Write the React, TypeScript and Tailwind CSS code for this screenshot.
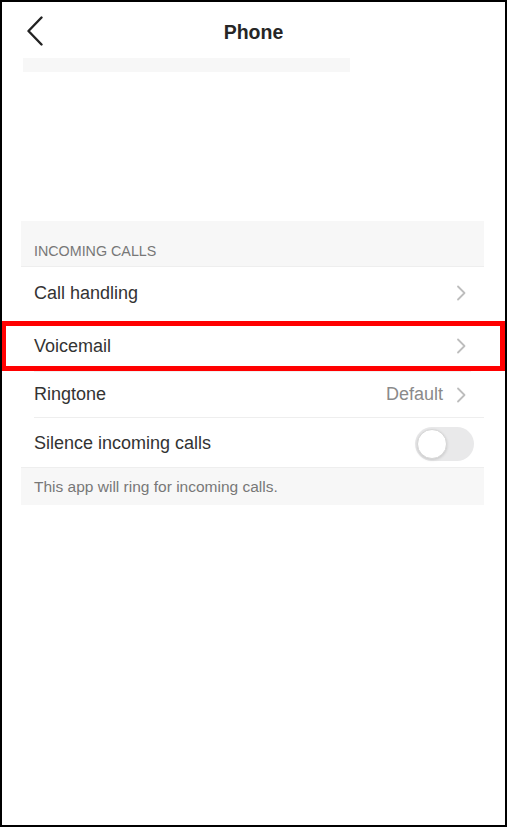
import type { ReactNode } from 'react';

function Chevron() {
  return (
    <svg width="10" height="16" viewBox="0 0 10 16" className="shrink-0">
      <path d="M2 1.5 L8.5 8 L2 14.5" fill="none" stroke="#bdbdbd" strokeWidth="1.8" strokeLinecap="round" strokeLinejoin="round" />
    </svg>
  );
}

interface RowProps {
  label: string;
  className?: string;
  children?: ReactNode;
}

function Row({ label, className = '', children }: RowProps) {
  return (
    <div className={`relative flex items-center justify-between pl-[13px] bg-white ${className}`}>
      <span className="text-[18px] text-[#333]">{label}</span>
      {children}
    </div>
  );
}

export default function App() {
  return (
    <div
      className="w-[507px] h-[827px] border-2 border-black bg-white overflow-hidden"
      style={{ fontFamily: '"Liberation Sans", Arial, sans-serif' }}
    >
      {/* top bar */}
      <div className="h-[56px] pt-[6px] grid grid-cols-[1fr_auto_1fr] items-center">
        <div className="pl-[24px] -mt-[4px]">
          <svg width="18" height="30" viewBox="0 0 18 30">
            <path d="M15.5 1.5 L2.5 15 L15.5 28.5" fill="none" stroke="#222" strokeWidth="2.4" strokeLinecap="round" strokeLinejoin="round" />
          </svg>
        </div>
        <span className="text-[19.5px] font-bold text-[#262626]">Phone</span>
        <div />
      </div>
      <div className="ml-[21px] w-[327px] h-[14px] bg-[#f7f7f7]" />

      {/* incoming calls section */}
      <div className="mt-[149px] ml-[19px] w-[463px]">
        <div className="h-[46px] pt-[16px] flex items-center pl-[13px] bg-[#f7f7f7] border-b border-[#eeeeee]">
          <span className="text-[14.3px] text-[#777]">INCOMING CALLS</span>
        </div>

        <Row label="Call handling" className="h-[50px] pt-[2px] pr-[18px]">
          <Chevron />
        </Row>

        <Row label="Voicemail" className="h-[54px] pt-[4px] pr-[18px]">
          <Chevron />
          <div className="absolute left-[-20px] top-[4px] w-[504px] h-[50px] border-[5px] border-[#ff0000]" />
        </Row>

        <div className="ml-[13px] mr-[13px] h-px bg-[#f0f0f0]" />

        <Row label="Ringtone" className="h-[45px] pr-[18px]">
          <div className="flex items-center gap-[13px]">
            <span className="text-[18px] text-[#8a8a8a]">Default</span>
            <Chevron />
          </div>
        </Row>

        <div className="ml-[13px] h-px bg-[#eeeeee]" />

        <Row label="Silence incoming calls" className="h-[49px] pt-[2px] pr-[10px]">
          <div className="w-[59px] h-[34px] rounded-full bg-[#e9e9ea] p-[2px] flex items-center">
            <div className="w-[30px] h-[30px] rounded-full bg-white border border-[#d6d6d6] shadow-[0_1px_3px_rgba(0,0,0,0.15)]" />
          </div>
        </Row>

        <div className="h-[38px] flex items-center pl-[13px] bg-[#f7f7f7] border-t border-[#eeeeee]">
          <span className="text-[15.5px] text-[#777]">This app will ring for incoming calls.</span>
        </div>
      </div>
    </div>
  );
}
